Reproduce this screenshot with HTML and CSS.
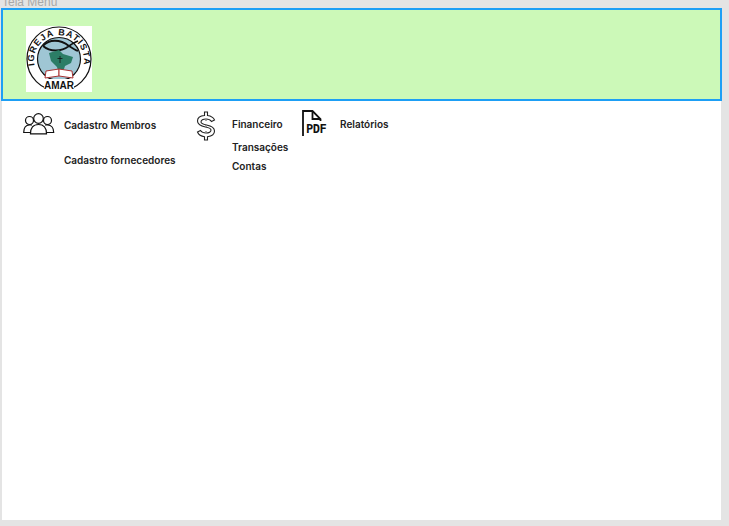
FILE: index.html
```html
<!DOCTYPE html>
<html lang="en">
	<head>
		<meta charset="UTF-8">
		<title>Tela Menu</title>
		<link rel="stylesheet" href="styles.css">
	</head>
	<body>
		<div class="frame-title">Tela Menu</div>
		<div class="frame">
			<div class="header">
				<div class="logo">
					<svg width="66" height="66" viewBox="0 0 66 66">
						<defs>
							<path id="arc-top" d="M10 44A25 25 0 1 1 56 44"/>
						</defs>
						<circle cx="33" cy="33" r="32" fill="#fff" stroke="#111" stroke-width="1.200"/>
						<circle cx="33" cy="33" r="21.500" fill="#9fc6d4" stroke="#111" stroke-width="1.200"/>
						<path d="M17 20C23 13 34 13 43 20C46 18 49 16 52 15M17 20C24 26 35 26 43 20C46 22 49 24 52 25" fill="none" stroke="#111" stroke-width="1.800"/>
						<path d="M23 27L33 24L37 28L47 31L45 37L39 40L37 46L33 48L31 41L25 35Z" fill="#2c7d66"/>
						<path d="M34 30V37M31.500 32.500H36.500" stroke="#111" stroke-width="0.800"/>
						<path d="M20 45L33 43V50L19 52Z" fill="#fff" stroke="#a33" stroke-width="1"/>
						<path d="M46 45L33 43V50L47 52Z" fill="#fff" stroke="#a33" stroke-width="1"/>
						<rect x="18" y="53" width="30" height="13" fill="#fff"/>
						<text class="logo-text"><textPath href="#arc-top" startOffset="50%" text-anchor="middle">IGREJA  BATISTA</textPath></text>
						<text class="logo-amar" x="33" y="62.500" text-anchor="middle">AMAR</text>
					</svg>
				</div>
			</div>
			<div class="menu">
				<div class="menu-group group-members">
					<svg class="icon-people" width="32" height="22" viewBox="0 0 32 22" fill="none" stroke="#111" stroke-width="1.200">
						<circle cx="15.500" cy="5.500" r="4.800"/>
						<circle cx="6.500" cy="7.500" r="4"/>
						<circle cx="24.500" cy="7.500" r="4"/>
						<path d="M7.500 20.800C7.500 15 10 11.500 15.500 11.500S23.500 15 23.500 20.800Z"/>
						<path d="M7.500 19.500H0.700C0.700 15 2.500 12 6.500 12H9M23.500 19.500H30.700C30.700 15 28.500 12 24.500 12H22"/>
					</svg>
					<ul class="menu-list">
						<li>Cadastro Membros</li>
						<li class="far">Cadastro fornecedores</li>
					</ul>
				</div>
				<div class="menu-group group-finance">
					<svg class="icon-dollar" width="20" height="30" viewBox="0 0 20 30" fill="none" stroke="#222" stroke-width="1.100">
						<path d="M8.500 1H11.500V4.500C15 5 17.500 6.500 18.500 9L15.500 10.500C14.500 9 12.500 8 10 8C7 8 5 9.200 5 11C5 12.800 7 13.300 10.500 14C15.500 15 18.500 16.500 18.500 20C18.500 23.500 15.500 25.300 11.500 25.700V29H8.500V25.700C5 25.300 2.500 23.500 1.500 21L4.500 19.500C5.500 21 7.500 22 10 22C13 22 15 20.800 15 19C15 17.200 13 16.700 9.500 16C4.500 15 1.500 13.500 1.500 10C1.500 6.500 4.500 4.800 8.500 4.500Z"/>
						<path d="M10 8V22" stroke="#888" stroke-width="1.500" stroke-dasharray="2 4"/>
					</svg>
					<ul class="menu-list">
						<li class="first">Financeiro</li>
						<li>Transações</li>
						<li>Contas</li>
					</ul>
				</div>
				<div class="menu-group group-reports">
					<div class="icon-pdf">
						<svg width="20" height="26" viewBox="0 0 20 26" fill="none" stroke="#111" stroke-width="1.800">
							<path d="M1 26V1H10.500L18.500 9V11"/>
							<path d="M10.500 1V9H18.500"/>
						</svg>
						<span class="pdf-label">PDF</span>
					</div>
					<ul class="menu-list">
						<li>Relatórios</li>
					</ul>
				</div>
			</div>
		</div>
	</body>
</html>
```

FILE: styles.css
```css
* {
    margin: 0;
    padding: 0;
    box-sizing: border-box;
}

body {
    font-family: 'Inter', sans-serif;
    background: #e4e4e4;
    width: 729px;
    height: 526px;
    overflow: hidden;
}

.frame-title {
    height: 8px;
    padding-left: 2px;
    font-family: 'Liberation Sans', sans-serif;
    font-size: 12px;
    line-height: 5px;
    color: #a8a8a8;
    overflow: hidden;
}

.frame {
    width: 719px;
    height: 512px;
    margin-left: 2px;
    background: white;
}

.header {
    height: 93px;
    width: 721px;
    background: #ccf9b8;
    border: 2px solid #1d9ff5;
    padding: 16px 0 0 24px;
    margin-left: -1px;
}

.logo {
    width: 66px;
    height: 66px;
    background: white;
    margin-left: -1px;
}

.logo svg {
    display: block;
}

.logo-text {
    font-family: 'Liberation Sans', sans-serif;
    font-size: 9px;
    font-weight: 700;
    letter-spacing: 1.1px;
    fill: #111;
}

.logo-amar {
    font-family: 'Liberation Sans', sans-serif;
    font-size: 10px;
    font-weight: 700;
    fill: #111;
}

.menu {
    display: flex;
    padding: 8px 0 0 21px;
}

.menu-group {
    display: flex;
    align-items: flex-start;
}

.group-members {
    width: 173px;
    gap: 9px;
    padding-top: 4px;
}

.group-finance {
    width: 106px;
    gap: 16px;
}

.group-reports {
    gap: 11px;
}

.menu-list {
    list-style: none;
    font-size: 10px;
    font-weight: 600;
    color: #222;
}

.menu-list li {
    height: 19px;
    line-height: 19px;
}

.group-members .menu-list {
    padding-top: 3px;
}

.group-finance .menu-list,
.group-reports .menu-list {
    padding-top: 6px;
}

.icon-dollar {
    margin-top: 2px;
}

.menu-list .far {
    margin-top: 16px;
}

.menu-list .first {
    margin-bottom: 4px;
}

.icon-pdf {
    position: relative;
    width: 27px;
    height: 27px;
    margin-top: 1px;
}

.icon-pdf svg {
    display: block;
}

.pdf-label {
    position: absolute;
    left: 3px;
    bottom: 1px;
    font-family: 'DejaVu Sans Mono', monospace;
    font-size: 12px;
    line-height: 13px;
    letter-spacing: -0.5px;
    font-weight: 700;
    color: #111;
    background: white;
    padding-left: 1px;
}
```
